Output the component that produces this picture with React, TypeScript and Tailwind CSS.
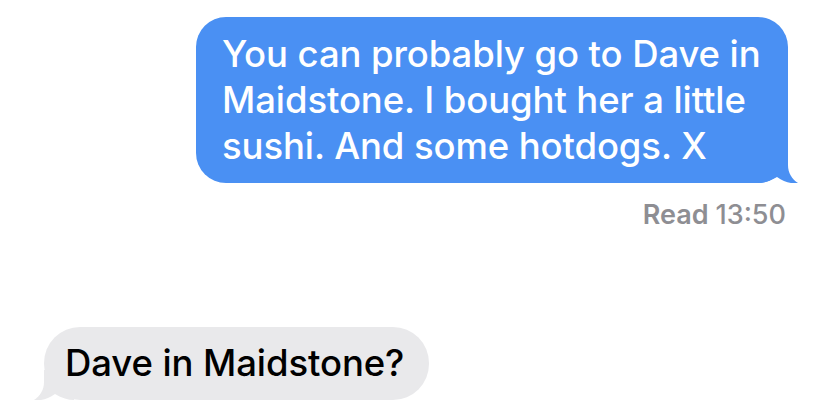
import React from 'react';

const font = { fontFamily: 'Inter, "Noto Sans", sans-serif' };

function BlueTail() {
  return (
    <svg className="absolute -right-[10px] bottom-0" width="40" height="30" viewBox="0 0 40 30">
      <path d="M0 0 H30 V12 C30 20 34 26 40 30 C33 31 26 29 19 24 C12 28 6 30 0 30 Z" fill="#4a90f3" />
    </svg>
  );
}

function GrayTail() {
  return (
    <svg className="absolute -left-[10px] bottom-0" width="40" height="30" viewBox="0 0 40 30">
      <path d="M40 0 H10 V12 C10 20 6 26 0 30 C7 31 14 29 21 24 C28 28 34 30 40 30 Z" fill="#e9e9eb" />
    </svg>
  );
}

export default function App() {
  return (
    <div className="w-[828px] h-[409px] overflow-hidden bg-white flex flex-col" style={font}>
      <div className="flex justify-end pr-[40px] pt-[17px]">
        <div className="relative w-[592px] h-[166px] rounded-[30px] bg-[#4a90f3] pl-[26px] pt-[14px] text-white text-[36.5px] font-medium leading-[46px] tracking-[-0.1px]">
          <BlueTail />
          <div className="relative whitespace-nowrap">
            You can probably go to Dave in
            <br />
            Maidstone. I bought her a little
            <br />
            sushi. And some hotdogs. X
          </div>
        </div>
      </div>
      <div className="flex justify-end pr-[42px] mt-[17px] text-[27px] leading-[30px] text-[#8e8e93]">
        <span className="font-semibold">Read</span>
        <span className="ml-[7px] font-medium">13:50</span>
      </div>
      <div className="flex justify-start pl-[44px] mt-[97px]">
        <div className="relative h-[73px] rounded-[36px] bg-[#e9e9eb] pl-[21px] pr-[25px] pt-[13px] text-black text-[36.5px] font-medium leading-[46px] tracking-[-0.1px] whitespace-nowrap">
          <GrayTail />
          <span className="relative">Dave in Maidstone?</span>
        </div>
      </div>
    </div>
  );
}
